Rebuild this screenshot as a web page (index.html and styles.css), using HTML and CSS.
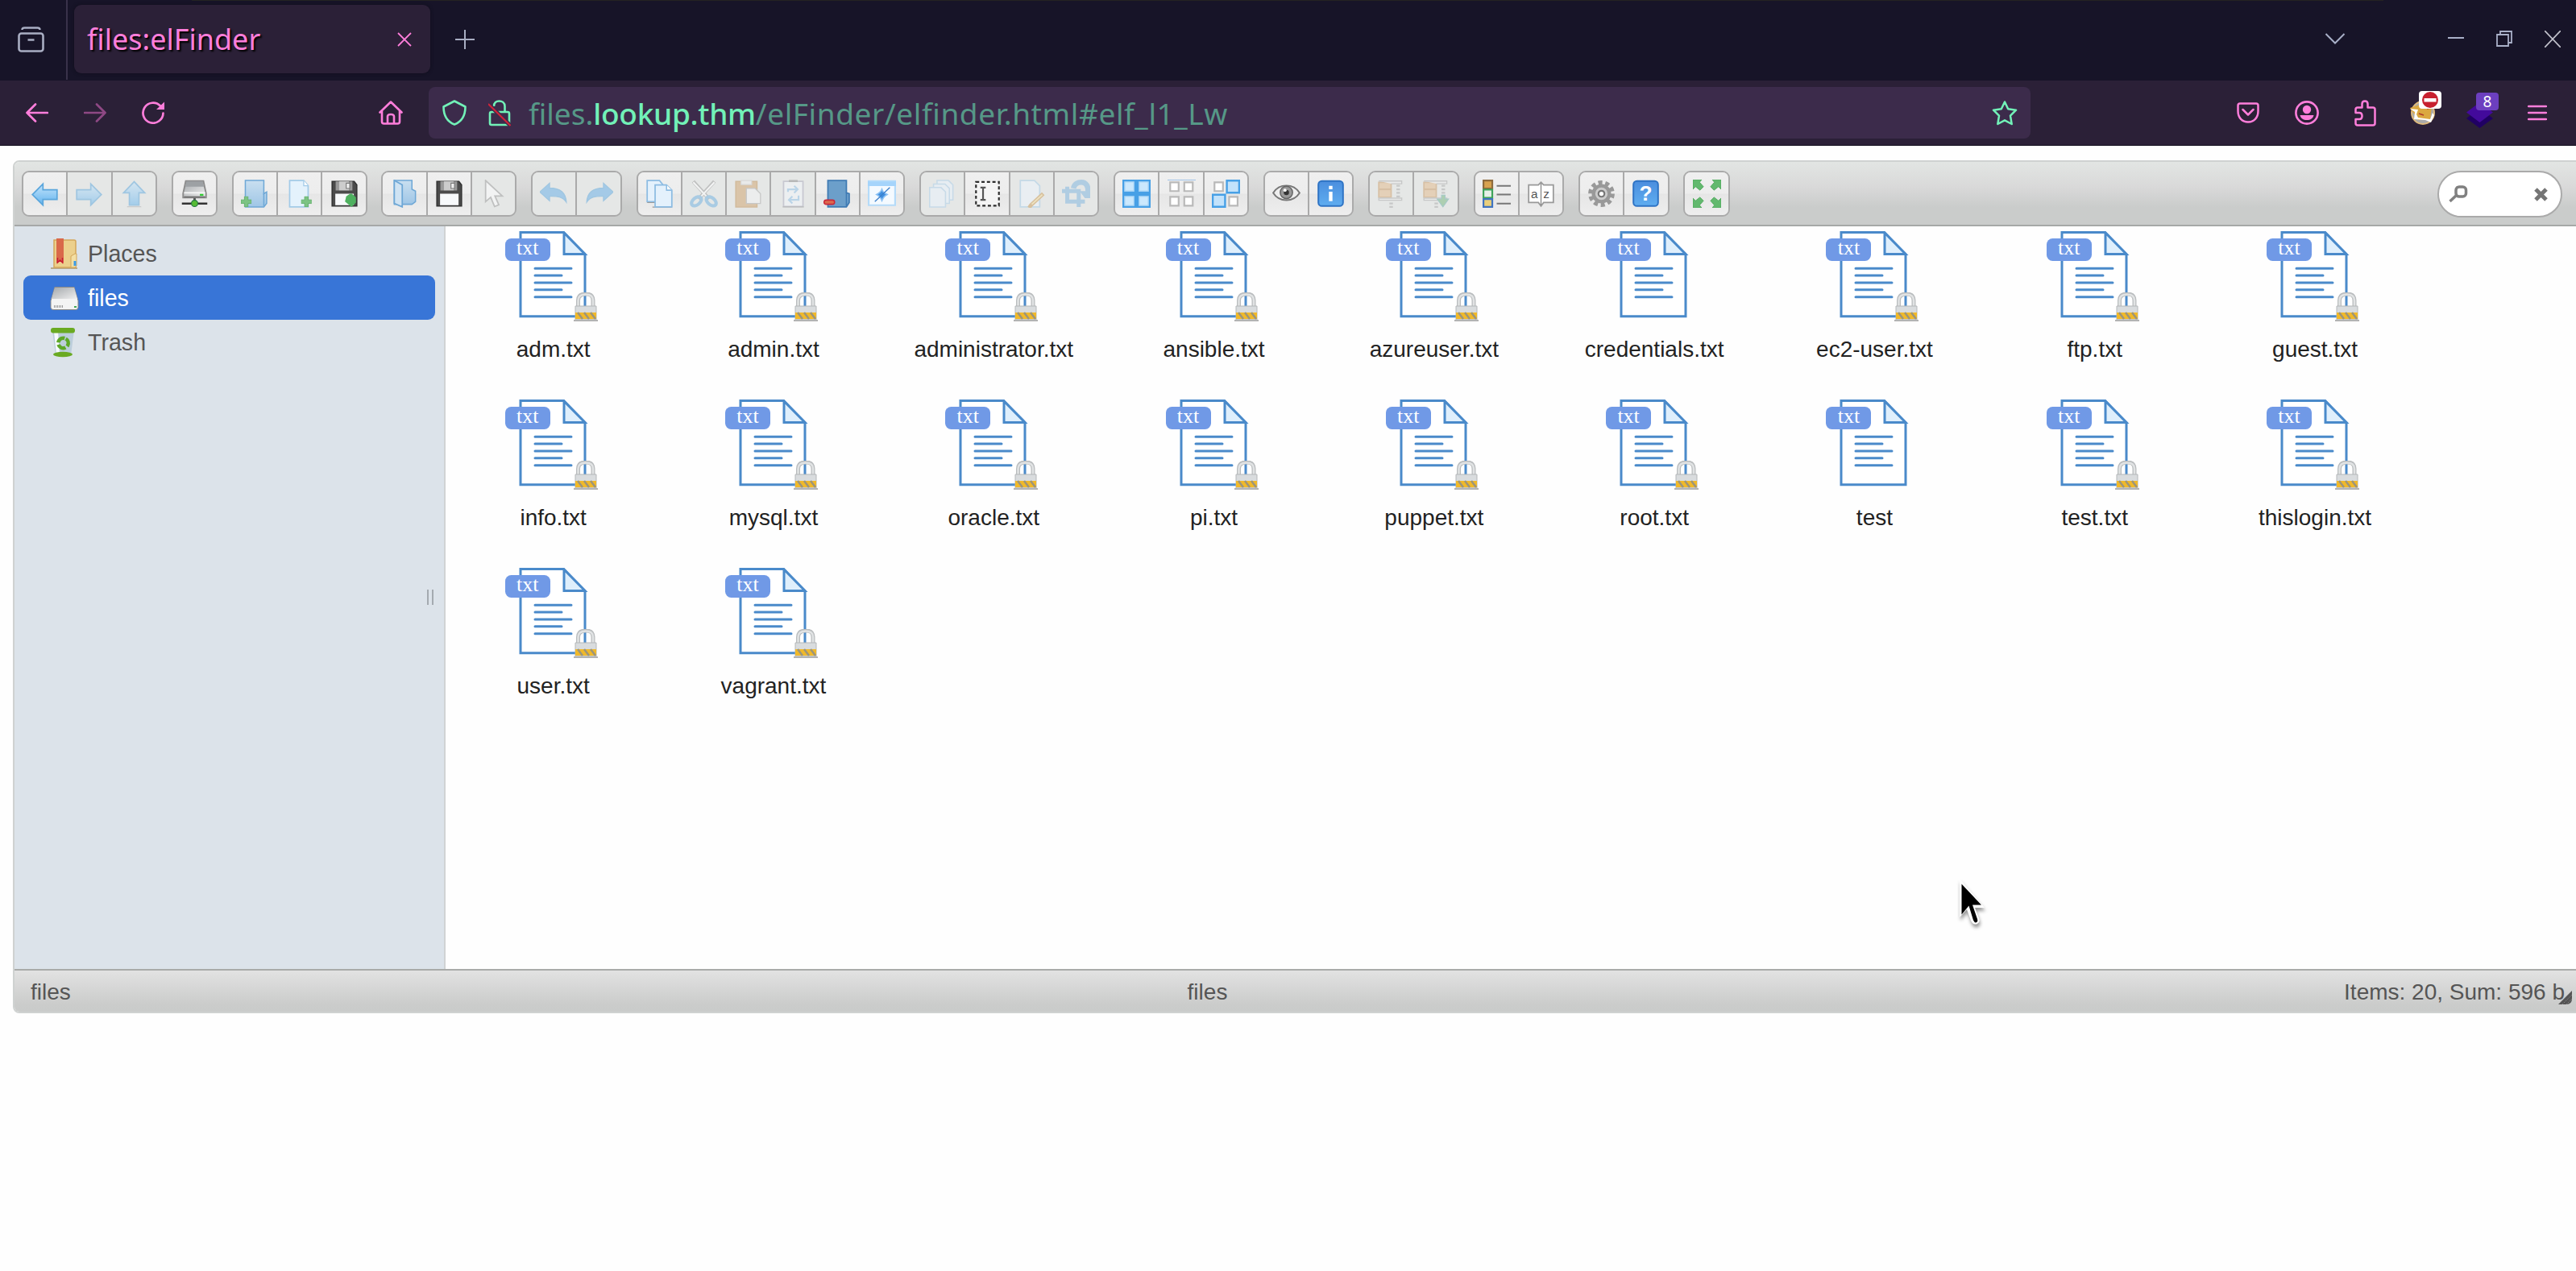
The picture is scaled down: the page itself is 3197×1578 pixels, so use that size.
FILE: index.html
```html
<!DOCTYPE html>
<html lang="en">
<head>
<meta charset="utf-8">
<title>files:elFinder</title>
<link rel="stylesheet" href="styles.css">
</head>
<body>
<svg class="defs" width="0" height="0" aria-hidden="true">
<defs>
<linearGradient id="blue" x1="0" y1="0" x2="0" y2="1"><stop offset="0" stop-color="#c4e4fb"/><stop offset="1" stop-color="#62b3ee"/></linearGradient>
<linearGradient id="fold" x1="0" y1="0" x2="0" y2="1"><stop offset="0" stop-color="#c9dff0"/><stop offset="1" stop-color="#9fc6e6"/></linearGradient>
<linearGradient id="metal" x1="0" y1="0" x2="1" y2="1"><stop offset="0" stop-color="#a4a8ab"/><stop offset="1" stop-color="#f0f0f0"/></linearGradient>
<linearGradient id="info" x1="0" y1="0" x2="0" y2="1"><stop offset="0" stop-color="#4b8ede"/><stop offset="1" stop-color="#5fadf0"/></linearGradient>
<symbol id="plus" viewBox="0 0 6 6"><path d="M2 0h2v2h2v2H4v2H2V4H0V2h2z" fill="#7cc383" stroke="#5fae67" stroke-width=".4"/></symbol>
<symbol id="i-back" viewBox="0 0 16 16"><path d="M1 8.500 7 2.500v3.300h8v5.400H7v3.300z" fill="url(#blue)" stroke="#5ba6dc" stroke-width=".8"/></symbol>
<symbol id="i-forward" viewBox="0 0 16 16"><path d="M15 8.500 9 2.500v3.300H1v5.400h8v3.300z" fill="url(#blue)" stroke="#5ba6dc" stroke-width=".8"/></symbol>
<symbol id="i-up" viewBox="0 0 16 16"><path d="M8 1.200 2 7.500h3.300v7h5.400v-7H14z" fill="url(#blue)" stroke="#5ba6dc" stroke-width=".8"/><path d="M4 15.400h8" stroke="#aaa" stroke-width=".5"/></symbol>
<symbol id="i-net" viewBox="0 0 16 16"><path d="M3 .8h10l1.500 7v2.400h-13V7.800z" fill="url(#metal)" stroke="#8c8c8c" stroke-width=".9"/><path d="M3.300 1h9.400l.6 3H2.700z" fill="#9da1a4"/><path d="M2 7.500h12" stroke="#f8f8f8" stroke-width=".8"/><path d="M2 9.900h12" stroke="#777"/><path d="M11 8.600h2" stroke="#3c3"/><path d="M8 10.500v3" stroke="#555" stroke-width="1.300"/><path d="M.8 13.600h14.400" stroke="#333" stroke-width="1.100"/><circle cx="8" cy="13.500" r="1.800" fill="#5b3" stroke="#274" stroke-width=".5"/></symbol>
<symbol id="i-mkdir" viewBox="0 0 16 16"><path d="M2.500.5h10.500V8l1.600-1v6.500L13 15.500H2.500z" fill="url(#fold)" stroke="#6fa8d6" stroke-width=".7"/><path d="M13 7.500v7.500" stroke="#6fa8d6" stroke-width=".7"/><use href="#plus" x="0" y="9.500" width="6" height="6"/></symbol>
<symbol id="i-mkfile" viewBox="0 0 16 16"><path d="M2.500.5h8l2.500 3v12H2.500z" fill="#e4f2fc" stroke="#a3cbe8" stroke-width=".8"/><path d="M10.500.5v3H13" fill="#fff" stroke="#a3cbe8" stroke-width=".6"/><use href="#plus" x="9" y="9.500" width="6" height="6"/></symbol>
<symbol id="i-save" viewBox="0 0 16 16"><path d="M1 1h12.500l1.500 2v12H1z" fill="#4b4b4b" stroke="#333" stroke-width=".7"/><path d="M3 1h9.500v5.200H3z" fill="#999"/><path d="M5 1h5.500v5H5z" fill="#ccc"/><path d="M9 2h2v3H9z" fill="#eee" stroke="#777" stroke-width=".5"/><path d="M2.800 8h10.500v6.500H2.800z" fill="#f7f9fb"/></symbol>
<symbol id="i-upload" viewBox="0 0 16 16"><use href="#i-save"/><path d="M9 9.500l2.200-1.500h1L14.500 10v3L12 15.500 8.300 12.500z" fill="#4eb05f"/></symbol>
<symbol id="i-open" viewBox="0 0 16 16"><path d="M2 .5h10v5l2 1v6L12 14H2z" fill="url(#fold)" stroke="#6fa8d6" stroke-width=".7"/><path d="M2 .5 6.500 3v12.500L2 13.500z" fill="#cfe3f3" stroke="#6fa8d6" stroke-width=".8"/></symbol>
<symbol id="i-cursor" viewBox="0 0 16 16"><path d="M3.500.5v12L6.400 10l2.200 5.300 2.400-1-2.200-5H13z" fill="#fff" stroke="#999" stroke-width=".8"/></symbol>
<symbol id="i-undo" viewBox="0 0 16 16"><path d="M0 7 5.500 2v2.800c6 0 9.200 2.700 9.500 8-2-3-5-3.500-9.500-3.400V12z" fill="#65aee8" stroke="#5ba6dc" stroke-width=".6"/></symbol>
<symbol id="i-redo" viewBox="0 0 16 16"><path d="M16 7 10.500 2v2.800c-6 0-9.200 2.700-9.500 8 2-3 5-3.500 9.500-3.400V12z" fill="#65aee8" stroke="#5ba6dc" stroke-width=".6"/></symbol>
<symbol id="i-copy" viewBox="0 0 16 16"><path d="M1 .5h7l2 2.500v9.500H1z" fill="#e4f1fc" stroke="#8dbce2" stroke-width=".8"/><path d="M1 13h5M4 15.600h11" stroke="#999" stroke-width=".5"/><path d="M5.500 3h6.500L15 6v9.500H5.500z" fill="#e4f1fc" stroke="#8dbce2" stroke-width=".8"/><path d="M12 3v3h3" fill="#fff" stroke="#8dbce2" stroke-width=".7"/></symbol>
<symbol id="i-cut" viewBox="0 0 16 16"><path d="M2 1 11 11M14 1 5 11" stroke="#999" stroke-width="2"/><path d="M2 1.500 10 10M14 1.500 6 10" stroke="#fff" stroke-width="1"/><ellipse cx="3.800" cy="12.300" rx="3.200" ry="2" transform="rotate(-40 3.800 12.300)" fill="none" stroke="#6fb0df" stroke-width="1.900"/><ellipse cx="12.200" cy="12.300" rx="3.200" ry="2" transform="rotate(40 12.200 12.300)" fill="none" stroke="#6fb0df" stroke-width="1.900"/></symbol>
<symbol id="i-paste" viewBox="0 0 16 16"><path d="M1 1h12v14.500H1z" fill="#cfa26b" stroke="#c08f55" stroke-width=".7"/><path d="M4 .5h6v2.300H4z" fill="#eee" stroke="#ccc" stroke-width=".5"/><path d="M7 5h5l3 3v5.500H7z" fill="#f4f4f4" stroke="#aaa" stroke-width=".6"/></symbol>
<symbol id="i-clip" viewBox="0 0 16 16"><path d="M2.500 1h11v14.200h-11z" fill="#f4f8fb" stroke="#aab" stroke-width=".8"/><path d="M5.500.8h5" stroke="#888" stroke-width="1.200"/><path d="M5 7V5.500h5M8.500 3.500l2 2-2 2M11 9v2.500H6M7.500 9.500l-2 2 2 2" fill="none" stroke="#8fc1e8"/><path d="M2 15.500h12" stroke="#888" stroke-width=".5"/></symbol>
<symbol id="i-rm" viewBox="0 0 16 16"><path d="M2.500.5h10.500v7l1.600.5v5L13 15.500H2.500z" fill="#6c9fca" stroke="#3e7ab3" stroke-width=".8"/><path d="M13 7.500v7.500" stroke="#3e7ab3" stroke-width=".7"/><rect x=".3" y="11.600" width="6" height="2.400" rx="1.200" fill="#dc6a4e" stroke="#c8283a" stroke-width=".7"/></symbol>
<symbol id="i-empty" viewBox="0 0 16 16"><path d="M.5.8h15v13.700H.5z" fill="#f4faff" stroke="#b5dbf9"/><path d="M0 1h16v2.600H0z" fill="#a5d4fb"/><path d="M8 5.500c.6 1.500 1 1.800 3 3-1.800 1-2.200 1.500-3 3.400-.8-2-1.200-2.400-3-3.400 1.800-1 2.400-1.500 3-3z" fill="#3f8fe0" stroke="#8ac0f3" stroke-width=".8"/><path d="M4 12.500 12.500 4.500" stroke="#3b7fcb" stroke-width=".6"/></symbol>
<symbol id="i-dup" viewBox="0 0 16 16"><path d="M5 .5h6.500L14 3v8.500H5z" fill="#e9f4fd" stroke="#a9cdea" stroke-width=".7"/><path d="M3 2.500h6.500L12 5v8.500H3z" fill="#e9f4fd" stroke="#a9cdea" stroke-width=".7"/><path d="M.8 4.500h6.500L9.800 7v8.500h-9z" fill="#e9f4fd" stroke="#a9cdea" stroke-width=".7"/></symbol>
<symbol id="i-rename" viewBox="0 0 16 16"><path d="M1.500 1.300h13v13.500h-13z" fill="#f4f4f4" stroke="#2d2d2d" stroke-width="1" stroke-dasharray="1.800 1.300"/><path d="M4 4.500h3M5.500 4.500v7M4 11.500h3" stroke="#555" fill="none"/></symbol>
<symbol id="i-edit" viewBox="0 0 16 16"><path d="M1.500.5h8l3 3v12h-11z" fill="#edf6fd" stroke="#a3cbe8" stroke-width=".8"/><path d="M14.500 8 7.500 14.500 6.500 16" fill="none" stroke="#c99a55" stroke-width="2.200"/><path d="M14 8.500 8 14" stroke="#f6df9a" stroke-width=".8"/></symbol>
<symbol id="i-resize" viewBox="0 0 16 16"><path d="M3 4v8.500h10M0 6.500h9.500V15.500" fill="none" stroke="#7db3de" stroke-width="2.300"/><path d="M6.500 5C7 2.500 9 1.500 11 1.500c2.800 0 4 2.300 3.800 6" fill="none" stroke="#7db3de" stroke-width="3"/><path d="M10 6.500h6.500v4H13z" fill="#7db3de"/></symbol>
<symbol id="i-all" viewBox="0 0 16 16"><path d="M0 0h16v16H0z" fill="#47a0e6"/><g fill="#cbe8fd" stroke="#a6d3f5" stroke-width=".6"><path d="M1.300 1.300h5.200v5.200H1.300zM9.500 1.300h5.200v5.200H9.500zM1.300 9.500h5.200v5.200H1.300zM9.500 9.500h5.200v5.200H9.500z"/></g></symbol>
<symbol id="i-none" viewBox="0 0 16 16"><path d="M0 .1h16" stroke="#86b5e4" stroke-width=".5"/><g fill="#fff" stroke="#b9b9b9"><path d="M1.500 1.500h4.800v5H1.500zM9.500 1.500h4.800v5H9.500zM1.500 9.800h4.800v5H1.500zM9.500 9.800h4.800v5H9.500z"/></g></symbol>
<symbol id="i-invert" viewBox="0 0 16 16"><g fill="#fff" stroke="#b9b9b9"><path d="M1.500 1.500h4.800v5H1.500zM9.800 9.800h4.800v5H9.800z"/></g><path d="M8.500.6h7v6.800h-7zM.5 8.600h7v6.800h-7z" fill="#c2e2fb" stroke="#47a0e6" stroke-width="1.100"/></symbol>
<symbol id="i-eye" viewBox="0 0 16 16"><path d="M.5 7.500C4 2 12 2 15.500 7.500 12 13 4 13 .5 7.500z" fill="#eee" stroke="#777" stroke-width=".9"/><circle cx="8" cy="7.300" r="3.500" fill="#999" stroke="#666" stroke-width=".7"/><circle cx="8" cy="7.300" r="1.500" fill="#333"/><circle cx="7.200" cy="6" r=".9" fill="#fff"/></symbol>
<symbol id="i-info" viewBox="0 0 16 16"><rect x="1" y=".8" width="14" height="14.200" rx="2" fill="url(#info)" stroke="#2e73c4" stroke-width=".9"/><path d="M7 3.500h2v2H7zM7 6.800h2v5.400H7z" fill="#fff"/></symbol>
<symbol id="i-extract" viewBox="0 0 16 16"><path d="M1 1.500h7v8.500H1z" fill="#e4b98a" stroke="#c99a65" stroke-width=".8"/><path d="M1 5.500h7" stroke="#c99a65"/><path d="M1 .8h13v1.500H8M1 10.500h13v1.200H1z" fill="#eee" stroke="#aaa" stroke-width=".6"/><path d="M12 3v7M8 13v3" stroke="#aaa" stroke-width="2" stroke-dasharray="1 1"/></symbol>
<symbol id="i-archive" viewBox="0 0 16 16"><use href="#i-extract"/><path d="M8.500 11h2.500V8.800h2V11H15l-3.200 4.500z" fill="#76b77c" stroke="#6aa" stroke-width=".5"/></symbol>
<symbol id="i-view" viewBox="0 0 16 16"><path d="M.5.5h5v4.600h-5z" fill="#d8a24e" stroke="#8d6a3c"/><path d="M.5 5.700h5v4.600h-5z" fill="#e6efe8" stroke="#3da35a"/><path d="M.5 11h5v4.500h-5z" fill="#e9cf7b" stroke="#3f73c0"/><path d="M8 3.500h8M8 8.500h8M8 13.600h8" stroke="#777" stroke-width=".9"/></symbol>
<symbol id="i-sort" viewBox="0 0 16 16"><path d="M1 3h5.500L8 1.500 9.500 3H15v10H9.500L8 15l-1.500-2H1z" fill="#fff" stroke="#999" stroke-width=".8"/><path d="M8 2v12.500" stroke="#888" stroke-width=".6"/></symbol>
<symbol id="i-gear" viewBox="0 0 16 16"><circle cx="8" cy="8" r="6.300" fill="none" stroke="#999" stroke-width="2.400" stroke-dasharray="2.300 1.658"/><circle cx="8" cy="8" r="4.500" fill="#ccc" stroke="#999" stroke-width="2"/><circle cx="8" cy="8" r="1.700" fill="#fff" stroke="#777"/></symbol>
<symbol id="i-help" viewBox="0 0 16 16"><rect x="1" y=".8" width="14" height="14.200" rx="2" fill="url(#info)" stroke="#2e73c4" stroke-width=".9"/></symbol>
<symbol id="i-full" viewBox="0 0 16 16"><g fill="#62b96e" stroke="#4fa75c" stroke-width=".4"><path d="M0 0h5L3.800 1.500 6 4 4 6 1.500 4 0 5.500zM16 0h-5l1.200 1.500L10 4l2 2 2.500-2L16 5.500zM0 16h5l-1.200-1.500L6 12l-2-2-2.500 2L0 10.500zM16 16h-5l1.200-1.500L10 12l2-2 2.500 2 1.500-1.500z"/></g></symbol>
<symbol id="doc" viewBox="0 0 116 112"><path d="M19 1.500h53.500L99 28.500v77.300H19z" fill="#fff" stroke="#4a8aca" stroke-width="3"/><path d="M73 2v26.500h26z" fill="#dfeffc" stroke="#4a8aca" stroke-width="3"/><path d="M37 46.200h45M37 55h33M37 64h45M37 72.700h33M37 81.700h45" stroke="#4a8aca" stroke-width="3" stroke-linecap="round"/><rect y="9" width="56" height="28" rx="7.500" fill="#7099e6"/></symbol>
<symbol id="lock" viewBox="0 0 30 36"><path d="M0 35h30" stroke="#999" stroke-width="1.500"/><path d="M5.500 17V10C5.500 3.500 10 2 15 2s9 1.500 9 8v7" fill="none" stroke="#b9bcbe" stroke-width="5"/><path d="M5.500 17V10C5.500 4 10 2.500 15 2.500S24 4 24 10v7" fill="none" stroke="#e1e3e4" stroke-width="2.500"/><path d="M2 17h26v17H2z" fill="#d9dcde" stroke="#b4b7b9"/><path d="M2 25h26v8H2z" fill="#f0b92a"/><path d="M5 25l6 8M13 25l6 8M21 25l6 8" stroke="#9d957a" stroke-width="2.500"/></symbol>
</defs>
</svg>

<header class="tabbar">
  <svg class="archive" width="33" height="32" viewBox="0 0 33 32" fill="none" stroke="#a9aec3" stroke-width="2.600"><rect x="1.500" y="8.500" width="30" height="22" rx="3"/><path d="M5.500 4c0-2 1-2.500 3-2.500h16c2 0 3 .5 3 2.500M12.500 16.500h8"/></svg>
  <span class="split"></span>
  <div class="tab"><span>files:elFinder</span>
    <svg width="18" height="18" viewBox="0 0 18 18" stroke="#ff7edb" stroke-width="1.800"><path d="M1 1l16 16M17 1 1 17"/></svg></div>
  <svg class="new" width="24" height="24" viewBox="0 0 24 24" stroke="#a9aec3" stroke-width="2"><path d="M12 0v24M0 12h24"/></svg>
  <div class="window">
    <svg width="26" height="14" viewBox="0 0 26 14" fill="none" stroke="#a9b0c8" stroke-width="2"><path d="M1.500 1 13 12.500 24.500 1"/></svg>
    <svg class="min" width="20" height="20" viewBox="0 0 20 20" stroke="#a9b0c8" stroke-width="2"><path d="M0 9h20"/></svg>
    <svg width="20" height="20" viewBox="0 0 20 20" fill="none" stroke="#a9b0c8" stroke-width="1.800"><path d="M1 5h14v14H1zM5 5V1h14v14h-4"/></svg>
    <svg width="20" height="21" viewBox="0 0 20 21" stroke="#c2c2cc" stroke-width="1.700"><path d="M0 0l20 21M20 0 0 21"/></svg>
  </div>
</header>

<nav class="navbar">
  <svg class="n-back" width="28" height="24" viewBox="0 0 28 24" fill="none" stroke="#ff7edb" stroke-width="2.700" stroke-linecap="round" stroke-linejoin="round"><path d="M27 12H1.500M12 1.500 1.500 12 12 22.500"/></svg>
  <svg class="n-fwd" width="28" height="24" viewBox="0 0 28 24" fill="none" stroke="#8e4884" stroke-width="2.700" stroke-linecap="round" stroke-linejoin="round"><path d="M1 12h25.500M16 1.500 26.500 12 16 22.500"/></svg>
  <svg class="n-reload" width="29" height="28" viewBox="0 0 29 28"><path d="M26.500 14.500A12.500 12.500 0 1 1 23 5.500" fill="none" stroke="#ff7edb" stroke-width="2.700" stroke-linecap="round"/><path d="M28 .5V10H18z" fill="#ff7edb"/></svg>
  <svg class="n-home" width="30" height="30" viewBox="0 0 30 30" fill="none" stroke="#ff7edb" stroke-width="2.600" stroke-linejoin="round" stroke-linecap="round"><path d="M1.500 14.500 15 1.500l13.500 13M4 13v13q0 2.500 2.500 2.500h17q2.500 0 2.500-2.500V13M11 28V19.500q0-2.500 4-2.500t4 2.500V28"/></svg>
  <div class="url">
    <svg width="30" height="32" viewBox="0 0 30 32" fill="none" stroke="#72f1b8" stroke-width="2.600" stroke-linejoin="round"><path d="M15 1.500 28.500 8.500C28.500 20 24 27 15 30.500 6 27 1.500 20 1.500 8.500z"/></svg>
    <svg class="insecure" width="28" height="33" viewBox="0 0 28 33" fill="none" stroke="#72f1b8" stroke-width="2.600"><path d="M7 8C7 3.500 10 1.500 13.500 1.500S20.500 3.500 20.500 8v7M2 29V17q0-2 2-2h20q2 0 2 2v12q0 2-2 2H4q-2 0-2-2z"/><path d="M0 5 27.500 32" stroke="#3c2b4b" stroke-width="5"/><path d="M0 5 27.500 32" stroke="#d0233a" stroke-width="2"/></svg>
    <span class="address">files.<b>lookup.thm</b><span class="path">/elFinder/elfinder.html#elf_l1_Lw</span></span>
    <svg class="star" width="32" height="31" viewBox="0 0 32 31" fill="none" stroke="#72f1b8" stroke-width="2.500" stroke-linejoin="round"><path d="M16 1.500 20.200 10.300 30 11.700 23 18.700 24.700 29 16 24.300 7.300 29 9 18.700 2 11.700 11.800 10.300z"/></svg>
  </div>
  <div class="exts">
    <svg width="28" height="26" viewBox="0 0 28 26" fill="none" stroke="#ff7edb" stroke-width="2.500" stroke-linejoin="round" stroke-linecap="round"><path d="M4 1.500h20q2.500 0 2.500 2.500v7c0 9-6 13.500-12.500 13.500S1.500 20 1.500 11V4Q1.500 1.500 4 1.500zM7.500 9l6.500 6.500L20.500 9"/></svg>
    <svg width="30" height="30" viewBox="0 0 30 30"><circle cx="15" cy="15" r="13.600" fill="none" stroke="#ff7edb" stroke-width="2.600"/><circle cx="15" cy="11" r="5.200" fill="#ff7edb"/><path d="M6.500 18h17c-1 4-4 6-8.500 6s-7.500-2-8.500-6z" fill="#ff7edb"/></svg>
    <svg class="puzzle" width="27" height="33" viewBox="0 0 27 33" fill="none" stroke="#ff7edb" stroke-width="2.500" stroke-linejoin="round"><path d="M1.500 16V12q0-2.500 2.500-2.500h5.500V5q0-3.500 3.500-3.500T16.500 5v4.500H23q2.500 0 2.500 2.500v17q0 2.500-2.500 2.500H4Q1.500 31.500 1.500 29v-5H6q3.500 0 3.500-4T6 16z"/></svg>
    <div class="ext"><svg width="33" height="30" viewBox="0 0 33 30"><circle cx="17" cy="15" r="14" fill="#aaa" stroke="#dfba7c" stroke-width="2"/><path d="M1 9l15-5 12 3-2 16-15 1z" fill="#dba840"/><path d="M1 10l6 4-1 9 14 1 7 3 4-9-2-3-3 8-15-2-2-4 2-6z" fill="#fff"/><path d="M12 16l6 2M22 10l5-1" stroke="#b03a2e" stroke-width="1.500"/></svg><span class="badge stop"><svg width="20" height="20" viewBox="0 0 20 20"><circle cx="10" cy="10" r="10" fill="#c7202f"/><path d="M2.500 8h15v4.500h-15z" fill="#fff"/></svg></span></div>
    <div class="ext"><svg width="33" height="38" viewBox="0 0 33 38"><path d="M16.500 13 33 26 16.500 38 0 26z" fill="#200063"/><path d="M16.500 6 33 18.500 16.500 31 0 18.500z" fill="#430a9b"/></svg><span class="badge count">8</span></div>
    <svg class="menu" width="24" height="20" viewBox="0 0 24 20" stroke="#ff7edb" stroke-width="2.500" stroke-linecap="round"><path d="M1 2h22M1 10h22M1 18h22"/></svg>
  </div>
</nav>

<main class="finder">
  <div class="toolbar">
    <div class="set"><i><svg><use href="#i-back"/></svg></i><i class="off"><svg><use href="#i-forward"/></svg></i><i class="off"><svg><use href="#i-up"/></svg></i></div>
    <div class="set"><i><svg><use href="#i-net"/></svg></i></div>
    <div class="set"><i><svg><use href="#i-mkdir"/></svg></i><i><svg><use href="#i-mkfile"/></svg></i><i><svg><use href="#i-upload"/></svg></i></div>
    <div class="set"><i><svg><use href="#i-open"/></svg></i><i><svg><use href="#i-save"/></svg></i><i class="off"><svg><use href="#i-cursor"/></svg></i></div>
    <div class="set"><i class="off"><svg><use href="#i-undo"/></svg></i><i class="off"><svg><use href="#i-redo"/></svg></i></div>
    <div class="set"><i><svg><use href="#i-copy"/></svg></i><i class="off"><svg><use href="#i-cut"/></svg></i><i class="off"><svg><use href="#i-paste"/></svg></i><i class="off"><svg><use href="#i-clip"/></svg></i><i><svg><use href="#i-rm"/></svg></i><i><svg><use href="#i-empty"/></svg></i></div>
    <div class="set"><i class="off"><svg><use href="#i-dup"/></svg></i><i><svg><use href="#i-rename"/></svg></i><i class="off"><svg><use href="#i-edit"/></svg></i><i class="off"><svg><use href="#i-resize"/></svg></i></div>
    <div class="set"><i><svg><use href="#i-all"/></svg></i><i><svg><use href="#i-none"/></svg></i><i><svg><use href="#i-invert"/></svg></i></div>
    <div class="set"><i><svg><use href="#i-eye"/></svg></i><i><svg><use href="#i-info"/></svg></i></div>
    <div class="set"><i class="off"><svg><use href="#i-extract"/></svg></i><i class="off"><svg><use href="#i-archive"/></svg></i></div>
    <div class="set"><i><svg><use href="#i-view"/></svg></i><i><svg viewBox="0 0 16 16"><use href="#i-sort"/><text class="az" x="2.300" y="10.500">a</text><text class="az" x="9.300" y="10.500">z</text></svg></i></div>
    <div class="set"><i><svg><use href="#i-gear"/></svg></i><i><svg viewBox="0 0 16 16"><use href="#i-help"/><text class="q" x="8" y="12">?</text></svg></i></div>
    <div class="set"><i><svg><use href="#i-full"/></svg></i></div>
    <div class="search">
      <svg width="24" height="22" viewBox="0 0 24 22" fill="none" stroke="#808080" stroke-width="3.500"><rect x="9" y="2" width="12.500" height="12" rx="4"/><path d="M9.500 12.500 1.500 20"/></svg>
      <svg width="17" height="17" viewBox="0 0 17 17" stroke="#757575" stroke-width="5"><path d="M2 2l13 13M15 2 2 15"/></svg>
    </div>
  </div>

  <div class="work">
    <aside class="tree">
      <div class="row"><svg width="36" height="38" viewBox="0 0 36 38"><path d="M1 37h33" stroke="#b9a98a" stroke-width="2"/><path d="M5 2h25q2 0 2 2v32H5z" fill="#ecd08c" stroke="#d3a659" stroke-width="1.500"/><path d="M26 36V22l5-3h2v15l-2 2z" fill="#f3dfa4" stroke="#d3a659"/><path d="M8 0h9v31l-4.500-3L8 31z" fill="#d9694a"/><path d="M9.500 24v6l3-3 3 3v-6" fill="none" stroke="#c81e34" stroke-width="1.500"/><path d="M29.500 28h3v6h-3z" fill="#3a9be8"/></svg>Places</div>
      <div class="row on"><svg width="36" height="29" viewBox="0 0 36 29"><path d="M6 .5h24l5 17v8q0 3-3 3H4q-3 0-3-3v-8z" fill="#f4f4f4" stroke="#888"/><path d="M6 1h24l4 14H2z" fill="url(#metal)"/><path d="M5 24.500h12" stroke="#999" stroke-width="3" stroke-dasharray="1 1"/><path d="M30 25h3" stroke="#4a5" stroke-width="2"/></svg>files</div>
      <div class="row"><svg width="36" height="38" viewBox="0 0 36 38"><path d="M3 4h27l-4 31q-10 4-19 0z" fill="#bccedb"/><path d="M5 6h5l2 28H8z" fill="#f6fafc"/><rect x="1" y="1" width="30" height="6.500" rx="3" fill="#6aaa22"/><ellipse cx="16" cy="34" rx="12" ry="3.200" fill="#6aaa22"/><circle cx="16.500" cy="20" r="6.200" fill="none" stroke="#5ea827" stroke-width="4.600" stroke-dasharray="10.500 2.480" transform="rotate(-60 16.500 20)"/></svg>Trash</div>
      <span class="grip"></span>
    </aside>
    <section class="files">
      <div class="file"><div class="icon"><svg class="d"><use href="#doc"/></svg><span>txt</span><svg class="l"><use href="#lock"/></svg></div>adm.txt</div>
      <div class="file"><div class="icon"><svg class="d"><use href="#doc"/></svg><span>txt</span><svg class="l"><use href="#lock"/></svg></div>admin.txt</div>
      <div class="file"><div class="icon"><svg class="d"><use href="#doc"/></svg><span>txt</span><svg class="l"><use href="#lock"/></svg></div>administrator.txt</div>
      <div class="file"><div class="icon"><svg class="d"><use href="#doc"/></svg><span>txt</span><svg class="l"><use href="#lock"/></svg></div>ansible.txt</div>
      <div class="file"><div class="icon"><svg class="d"><use href="#doc"/></svg><span>txt</span><svg class="l"><use href="#lock"/></svg></div>azureuser.txt</div>
      <div class="file"><div class="icon"><svg class="d"><use href="#doc"/></svg><span>txt</span></div>credentials.txt</div>
      <div class="file"><div class="icon"><svg class="d"><use href="#doc"/></svg><span>txt</span><svg class="l"><use href="#lock"/></svg></div>ec2-user.txt</div>
      <div class="file"><div class="icon"><svg class="d"><use href="#doc"/></svg><span>txt</span><svg class="l"><use href="#lock"/></svg></div>ftp.txt</div>
      <div class="file"><div class="icon"><svg class="d"><use href="#doc"/></svg><span>txt</span><svg class="l"><use href="#lock"/></svg></div>guest.txt</div>
      <div class="file"><div class="icon"><svg class="d"><use href="#doc"/></svg><span>txt</span><svg class="l"><use href="#lock"/></svg></div>info.txt</div>
      <div class="file"><div class="icon"><svg class="d"><use href="#doc"/></svg><span>txt</span><svg class="l"><use href="#lock"/></svg></div>mysql.txt</div>
      <div class="file"><div class="icon"><svg class="d"><use href="#doc"/></svg><span>txt</span><svg class="l"><use href="#lock"/></svg></div>oracle.txt</div>
      <div class="file"><div class="icon"><svg class="d"><use href="#doc"/></svg><span>txt</span><svg class="l"><use href="#lock"/></svg></div>pi.txt</div>
      <div class="file"><div class="icon"><svg class="d"><use href="#doc"/></svg><span>txt</span><svg class="l"><use href="#lock"/></svg></div>puppet.txt</div>
      <div class="file"><div class="icon"><svg class="d"><use href="#doc"/></svg><span>txt</span><svg class="l"><use href="#lock"/></svg></div>root.txt</div>
      <div class="file"><div class="icon"><svg class="d"><use href="#doc"/></svg><span>txt</span></div>test</div>
      <div class="file"><div class="icon"><svg class="d"><use href="#doc"/></svg><span>txt</span><svg class="l"><use href="#lock"/></svg></div>test.txt</div>
      <div class="file"><div class="icon"><svg class="d"><use href="#doc"/></svg><span>txt</span><svg class="l"><use href="#lock"/></svg></div>thislogin.txt</div>
      <div class="file"><div class="icon"><svg class="d"><use href="#doc"/></svg><span>txt</span><svg class="l"><use href="#lock"/></svg></div>user.txt</div>
      <div class="file"><div class="icon"><svg class="d"><use href="#doc"/></svg><span>txt</span><svg class="l"><use href="#lock"/></svg></div>vagrant.txt</div>
    </section>
  </div>

  <footer class="status"><span>files</span><span>files</span><span>Items: 20, Sum: 596 b</span>
    <svg class="handle" width="17" height="17" viewBox="0 0 17 17"><path d="M17 0v10q0 7-7 7H0z" fill="#555"/><path d="M5 17 17 5M10 17l7-7" stroke="#888" stroke-dasharray="1.500 1.500"/></svg></footer>
</main>

<svg class="pointer" width="40" height="64" viewBox="0 0 40 64"><path d="M4 3v48l9-10 5 14q3 6 8 4 4-2 2-7l-5-13h12z" fill="#fff"/><path d="M6.500 9.500v38l9-11 5.500 18q2 4 4 2.500 2-1 1-4l-6-17.500h11z" fill="#000"/></svg>
</body>
</html>
```
FILE: styles.css
```css
* { box-sizing: border-box; }
body {
  margin: 0;
  width: 3197px;
  height: 1578px;
  overflow: hidden;
  background: #fefefe;
  font-family: "Liberation Sans", Arial, sans-serif;
}
svg { display: block; flex: none; }
.defs { position: absolute; }

/* tab strip */
.tabbar {
  display: flex;
  align-items: flex-start;
  height: 100px;
  padding-left: 22px;
  background: #171428 linear-gradient(#242322, #242322) 238px 0 / 2720px 1px no-repeat;
}
.archive { margin-top: 33px; }
.split { width: 2px; height: 99px; margin-left: 27px; background: #39324a; }
.tab {
  display: flex;
  align-items: center;
  justify-content: space-between;
  width: 442px;
  height: 85px;
  margin: 6px 0 0 8px;
  padding: 0 23px 0 16px;
  border-radius: 9px;
  background: #2b2037;
  box-shadow: 0 0 4px #100e1c;
  color: #ff7edb;
  font: 36px/46px "Noto Sans", sans-serif;
  text-shadow: 2px 2px 2px #000;
}
.tab span { letter-spacing: 0; }
.new { margin: 37px 0 0 31px; }
.window { display: flex; align-items: center; height: 96px; margin-left: 2296px; }
.window svg { margin-left: 40px; }
.window svg:first-child { margin-left: 0; }
.window .min { margin-left: 127px; }

/* address row */
.navbar {
  display: flex;
  align-items: center;
  height: 81px;
  padding-left: 32px;
  border-bottom: 1px solid #120f1e;
  background: #2b2037;
}
.n-fwd { margin-left: 44px; }
.n-reload { margin-left: 44px; }
.n-home { margin-left: 265px; }
.url {
  display: flex;
  align-items: center;
  width: 1988px;
  height: 64px;
  margin-left: 32px;
  padding: 0 16px 0 17px;
  border-radius: 8px;
  background: #3c2b4b;
}
.insecure { margin-left: 27px; }
.address {
  flex: 1;
  margin-left: 22px;
  padding-top: 2px;
  color: #569887;
  font: 37px/60px "Noto Sans", sans-serif;
  white-space: nowrap;
}
.address b { color: #72f1b8; font-weight: 500; letter-spacing: -0.3px; }
.path { letter-spacing: 0.6px; }
.exts { display: flex; align-items: center; margin-left: 256px; }
.exts > * { margin-right: 44px; }
.ext { position: relative; }
.exts .puzzle { margin-right: 41px; }
.exts .ext { margin-right: 38px; }
.badge {
  position: absolute;
  top: -12px;
  left: 12px;
  display: flex;
  align-items: center;
  justify-content: center;
  width: 28px;
  height: 22px;
  border-radius: 4px;
}
.stop { background: #fff; }
.count { top: -6px; background: #6c3fbf; color: #fff; font: 19px/22px "Noto Sans", sans-serif; }
.exts .menu { margin: 0 0 0 5px; }

/* file manager */
.finder {
  width: 3200px;
  height: 1059px;
  margin: 18px 0 0 16px;
  border: 2px solid #cfd2d1;
  border-radius: 8px;
  overflow: hidden;
}
.toolbar {
  display: flex;
  align-items: flex-start;
  height: 80px;
  padding: 11px 0 0 9px;
  border-bottom: 2px solid #a6a8a7;
  background: linear-gradient(#e2e5e3, #d9d9d9 40%, #cacccb 72%, #cacccb);
}
.set {
  display: flex;
  height: 57px;
  margin-right: 17.800px;
  border: 2px solid #aaa;
  border-radius: 9px;
  overflow: hidden;
}
.set i {
  display: flex;
  align-items: center;
  justify-content: center;
  width: 55.300px;
  border-right: 2px solid #aaa;
  background: linear-gradient(#efefef, #ededed 49%, #e6e6e6 51%, #eee);
}
.set i:last-child { width: 53.300px; border-right: 0; }
.set .off { background: #e5e7e6; }
.set .off svg { opacity: .5; }
.set svg { width: 35px; height: 35px; }
.az { font: 7px "Liberation Sans", sans-serif; fill: #555; }
.q { font: bold 12px "Liberation Sans", sans-serif; fill: #fff; text-anchor: middle; }
.search {
  display: flex;
  align-items: center;
  justify-content: space-between;
  width: 155px;
  height: 58px;
  margin-left: 861px;
  padding: 0 16px 0 12px;
  border: 2px solid #aaa;
  border-radius: 29px;
  background: #fff;
}
.work { display: flex; height: 922px; }
.tree {
  position: relative;
  width: 535px;
  padding: 6px 11px 0 11px;
  border-right: 2px solid #d0d3d4;
  background: #dce3ea;
  color: #555;
  font-size: 28.600px;
}
.row {
  display: flex;
  align-items: center;
  gap: 11px;
  height: 55px;
  padding: 1px 0 0 33px;
  border-radius: 9px;
}
.on { background: #3875d7; color: #fff; }
.grip {
  position: absolute;
  top: 451px;
  right: 13px;
  width: 8px;
  height: 19px;
  border: solid #a4aab0;
  border-width: 0 2px;
}
.files {
  display: grid;
  grid-template-columns: repeat(9, 273.300px);
  grid-auto-rows: 209.200px;
  align-content: start;
  margin-left: -3px;
  padding-top: 6px;
  color: #222;
  font-size: 28px;
}
.file { display: flex; flex-direction: column; align-items: center; line-height: 34px; }
.icon { position: relative; width: 116px; height: 112px; margin: 0 4px 18px 0; }
.icon .d { width: 116px; height: 112px; }
.icon span {
  position: absolute;
  top: 6px;
  left: 0;
  width: 56px;
  color: #fff;
  font: 26px/30px "Liberation Serif", serif;
  text-align: center;
}
.icon .l { position: absolute; left: 85px; top: 76px; width: 30px; height: 36px; }
.status {
  position: relative;
  display: grid;
  grid-template-columns: 1fr 1fr 1fr;
  height: 54px;
  padding: 0 31px 0 20px;
  border-top: 2px solid #a9aba9;
  background: linear-gradient(#e2e2e2, #cbcccb 80%, #c9cbca);
  color: #555;
  font-size: 28px;
  line-height: 53px;
}
.status span:nth-child(2) { text-align: center; padding-right: 224px; }
.status span:nth-child(3) { text-align: right; }
.handle { position: absolute; right: 22px; top: 25px; }

.pointer {
  position: absolute;
  left: 2428px;
  top: 1088px;
  filter: drop-shadow(1px 4px 2px rgba(0, 0, 0, .4));
}
```
